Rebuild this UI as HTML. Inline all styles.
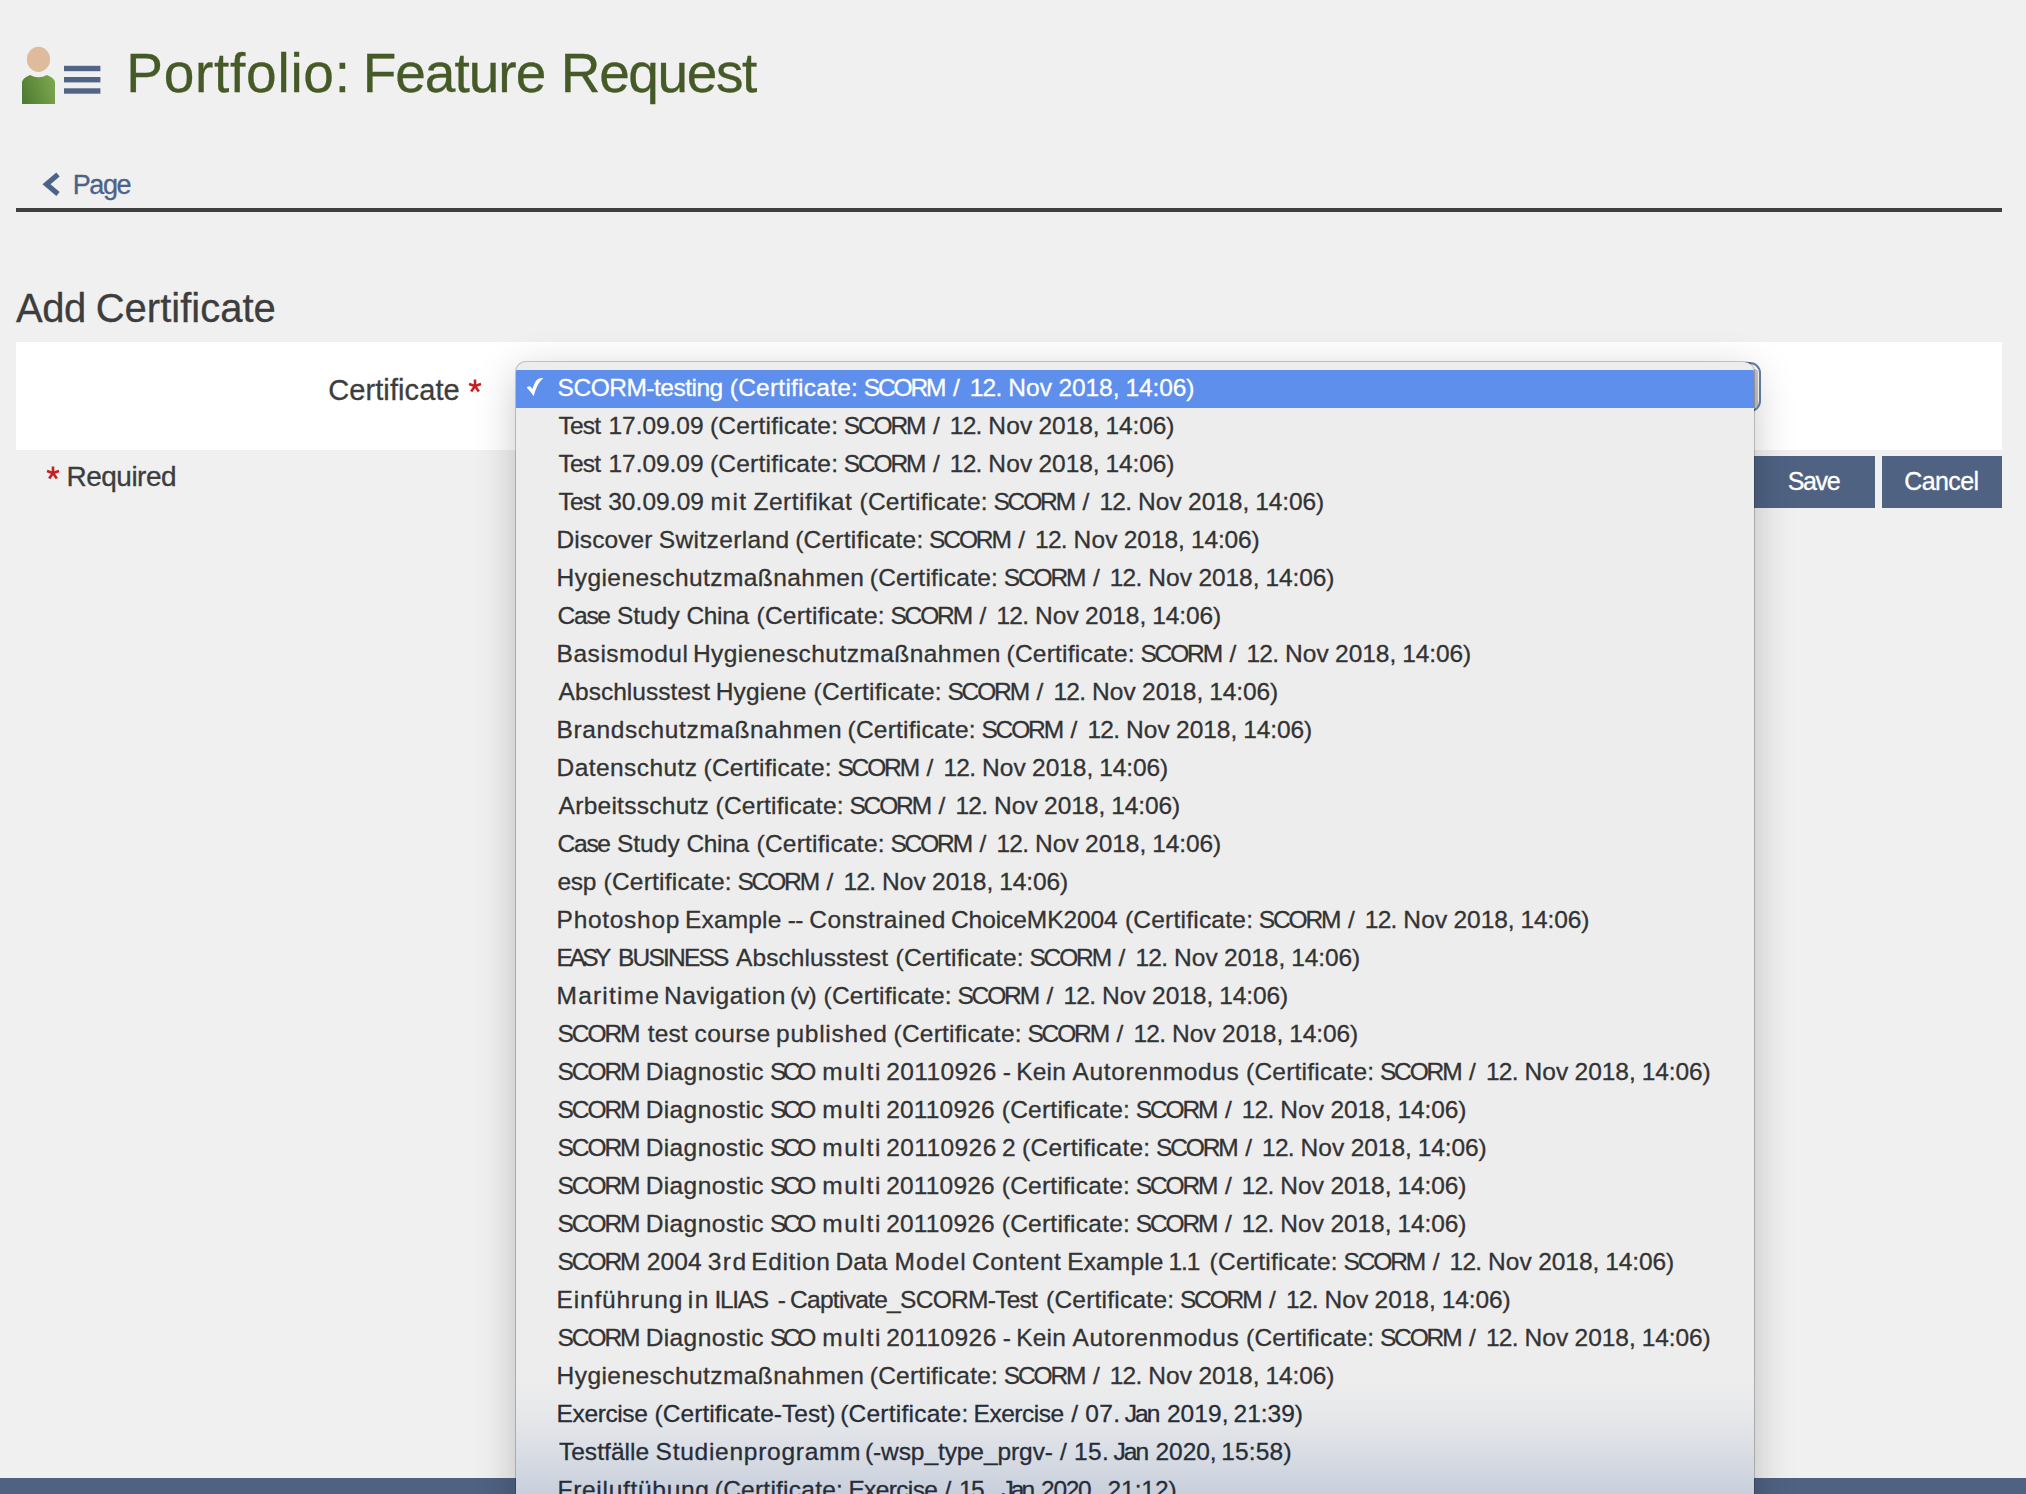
<!DOCTYPE html>
<html><head><meta charset="utf-8"><style>
html,body{margin:0;padding:0;width:2026px;height:1494px;overflow:hidden;background:#f0f0f0;font-family:"Liberation Sans",sans-serif;}
.abs{position:absolute;}
.tx{position:absolute;white-space:nowrap;line-height:1;-webkit-text-stroke:0.3px currentColor;}
#hr{left:16px;top:208px;width:1986px;height:4px;background:#404040;}
#panel{left:16px;top:342px;width:1986px;height:108px;background:#fff;}
.btn{position:absolute;top:456px;height:52px;background:#4f6282;}
#footer{left:0;top:1478px;width:2026px;height:16px;background:#4f6282;}
#sel{left:1000px;top:362px;width:757px;height:46px;border:2px solid #687ea3;border-radius:11px;background:#fff;}
#selband{left:1754px;top:369px;width:4px;height:39px;background:#c6c6c6;border-radius:0 4px 4px 0;}
#menu{left:516px;top:362px;width:1238px;height:1200px;background:#ededed;border-radius:10px 10px 0 0;
 box-shadow:0 0 0 1px rgba(0,0,0,0.2), 0 10px 40px rgba(0,0,0,0.22);overflow:hidden;}
#grad{position:absolute;left:0;top:1013px;width:100%;height:119px;background:linear-gradient(to bottom, rgba(191,200,216,0) 0%, rgba(191,200,216,0.12) 30%, rgba(191,200,216,0.4) 62%, rgba(191,200,216,0.8) 100%);}
#hl{position:absolute;left:0;top:8px;width:100%;height:38px;background:#5f8fec;}
#chk{position:absolute;left:4px;top:10px;}
</style></head><body>
<svg class="abs" style="left:0;top:0" width="110" height="110" viewBox="0 0 110 110">
 <defs><linearGradient id="bg1" x1="0" y1="0.65" x2="1" y2="0.35"><stop offset="0" stop-color="#4f7d34"/><stop offset="1" stop-color="#7da64c"/></linearGradient></defs>
 <ellipse cx="38.5" cy="59.4" rx="11.6" ry="12.6" fill="#dfbb9d"/>
 <path d="M22 104 L22 83 Q22 78 30 75 Q38.5 79.5 47 75 Q55 78 55 83 L55 104 Z" fill="url(#bg1)"/>
 <rect x="64" y="65.8" width="36.4" height="5.4" fill="#536385"/>
 <rect x="64" y="77" width="36.4" height="5.4" fill="#536385"/>
 <rect x="64" y="88.3" width="36.4" height="5.4" fill="#536385"/>
</svg>
<svg class="abs" style="left:41px;top:170px" width="24" height="30" viewBox="0 0 24 30">
 <path d="M17 4.5 L5.5 14.2 L17 24" fill="none" stroke="#4c6389" stroke-width="5.2" stroke-linecap="butt"/>
</svg>
<div id="hr" class="abs"></div>
<div id="panel" class="abs"></div>
<svg class="abs" style="left:467px;top:378px" width="16" height="16" viewBox="0 0 16 16"><g stroke="#c7201f" stroke-width="2.6" stroke-linecap="butt"><path d="M8 1.5 V8"/><path d="M8 8 L2 6"/><path d="M8 8 L14 6"/><path d="M8 8 L4.2 13.5"/><path d="M8 8 L11.8 13.5"/></g></svg>
<svg class="abs" style="left:45px;top:465px" width="16" height="16" viewBox="0 0 16 16"><g stroke="#c7201f" stroke-width="2.6" stroke-linecap="butt"><path d="M8 1.5 V8"/><path d="M8 8 L2 6"/><path d="M8 8 L14 6"/><path d="M8 8 L4.2 13.5"/><path d="M8 8 L11.8 13.5"/></g></svg>
<div class="btn" style="left:1754px;width:121px"></div>
<div class="btn" style="left:1882px;width:120px"></div>
<div class="tx" style="left:126.30px;top:46px;font-size:55px;letter-spacing:0.733px;color:#455a27">Portfolio:</div>
<div class="tx" style="left:362.70px;top:46px;font-size:55px;letter-spacing:-1.000px;color:#455a27">Feature</div>
<div class="tx" style="left:560.80px;top:46px;font-size:55px;letter-spacing:-1.383px;color:#455a27">Request</div>
<div class="tx" style="left:72.80px;top:172px;font-size:27px;letter-spacing:-1.433px;color:#4c6389">Page</div>
<div class="tx" style="left:16.00px;top:288px;font-size:40px;letter-spacing:-0.450px;color:#3d3d3d">Add</div>
<div class="tx" style="left:95.70px;top:288px;font-size:40px;letter-spacing:0.000px;color:#3d3d3d">Certificate</div>
<div class="tx" style="left:328.20px;top:376px;font-size:29px;letter-spacing:0.100px;color:#3d3d3d">Certificate</div>
<div class="tx" style="left:66.60px;top:463px;font-size:28px;letter-spacing:-0.529px;color:#3d3d3d">Required</div>
<div class="tx" style="left:1787.70px;top:469px;font-size:25px;letter-spacing:-1.367px;color:#fff">Save</div>
<div class="tx" style="left:1904.20px;top:469px;font-size:25px;letter-spacing:-0.580px;color:#fff">Cancel</div>
<div id="footer" class="abs"></div>
<div id="sel" class="abs"></div>
<div id="selband" class="abs"></div>
<div id="menu" class="abs">
<div id="grad"></div>
<div id="hl"></div>
<svg id="chk" width="32" height="30" viewBox="0 0 32 30"><path d="M6.8 15.8 Q7.6 14.2 9.2 14.2 Q11 14.6 12.4 16.9 Q14.6 10.5 17 7.8 Q19 5.8 23.3 6.1 Q20.2 9 18 12.6 Q15.8 16.8 13.6 24.3 Q10.4 19.2 6.8 15.8 Z" fill="#fff"/></svg>
<div class="tx" style="left:41.60px;top:14px;font-size:24.5px;letter-spacing:-0.492px;color:#fff">SCORM-testing</div>
<div class="tx" style="left:213.80px;top:14px;font-size:24.5px;letter-spacing:0.233px;color:#fff">(Certificate:</div>
<div class="tx" style="left:347.70px;top:14px;font-size:24.5px;letter-spacing:-2.125px;color:#fff">SCORM</div>
<div class="tx" style="left:436.90px;top:14px;font-size:24.5px;letter-spacing:0.000px;color:#fff">/</div>
<div class="tx" style="left:453.70px;top:14px;font-size:24.5px;letter-spacing:-0.750px;color:#fff">12.</div>
<div class="tx" style="left:492.20px;top:14px;font-size:24.5px;letter-spacing:0.150px;color:#fff">Nov</div>
<div class="tx" style="left:542.40px;top:14px;font-size:24.5px;letter-spacing:-0.050px;color:#fff">2018,</div>
<div class="tx" style="left:609.50px;top:14px;font-size:24.5px;letter-spacing:-0.120px;color:#fff">14:06)</div>
<div class="tx" style="left:42.60px;top:52px;font-size:24.5px;letter-spacing:-0.800px;color:#333">Test</div>
<div class="tx" style="left:92.50px;top:52px;font-size:24.5px;letter-spacing:-0.043px;color:#333">17.09.09</div>
<div class="tx" style="left:193.90px;top:52px;font-size:24.5px;letter-spacing:0.233px;color:#333">(Certificate:</div>
<div class="tx" style="left:327.80px;top:52px;font-size:24.5px;letter-spacing:-2.125px;color:#333">SCORM</div>
<div class="tx" style="left:417.00px;top:52px;font-size:24.5px;letter-spacing:0.000px;color:#333">/</div>
<div class="tx" style="left:433.80px;top:52px;font-size:24.5px;letter-spacing:-0.750px;color:#333">12.</div>
<div class="tx" style="left:472.30px;top:52px;font-size:24.5px;letter-spacing:0.150px;color:#333">Nov</div>
<div class="tx" style="left:522.50px;top:52px;font-size:24.5px;letter-spacing:-0.050px;color:#333">2018,</div>
<div class="tx" style="left:589.60px;top:52px;font-size:24.5px;letter-spacing:-0.120px;color:#333">14:06)</div>
<div class="tx" style="left:42.60px;top:90px;font-size:24.5px;letter-spacing:-0.800px;color:#333">Test</div>
<div class="tx" style="left:92.50px;top:90px;font-size:24.5px;letter-spacing:-0.043px;color:#333">17.09.09</div>
<div class="tx" style="left:193.90px;top:90px;font-size:24.5px;letter-spacing:0.233px;color:#333">(Certificate:</div>
<div class="tx" style="left:327.80px;top:90px;font-size:24.5px;letter-spacing:-2.125px;color:#333">SCORM</div>
<div class="tx" style="left:417.00px;top:90px;font-size:24.5px;letter-spacing:0.000px;color:#333">/</div>
<div class="tx" style="left:433.80px;top:90px;font-size:24.5px;letter-spacing:-0.750px;color:#333">12.</div>
<div class="tx" style="left:472.30px;top:90px;font-size:24.5px;letter-spacing:0.150px;color:#333">Nov</div>
<div class="tx" style="left:522.50px;top:90px;font-size:24.5px;letter-spacing:-0.050px;color:#333">2018,</div>
<div class="tx" style="left:589.60px;top:90px;font-size:24.5px;letter-spacing:-0.120px;color:#333">14:06)</div>
<div class="tx" style="left:42.60px;top:128px;font-size:24.5px;letter-spacing:-0.800px;color:#333">Test</div>
<div class="tx" style="left:92.20px;top:128px;font-size:24.5px;letter-spacing:0.057px;color:#333">30.09.09</div>
<div class="tx" style="left:194.60px;top:128px;font-size:24.5px;letter-spacing:1.400px;color:#333">mit</div>
<div class="tx" style="left:237.60px;top:128px;font-size:24.5px;letter-spacing:0.467px;color:#333">Zertifikat</div>
<div class="tx" style="left:343.50px;top:128px;font-size:24.5px;letter-spacing:0.233px;color:#333">(Certificate:</div>
<div class="tx" style="left:477.40px;top:128px;font-size:24.5px;letter-spacing:-2.125px;color:#333">SCORM</div>
<div class="tx" style="left:566.60px;top:128px;font-size:24.5px;letter-spacing:0.000px;color:#333">/</div>
<div class="tx" style="left:583.40px;top:128px;font-size:24.5px;letter-spacing:-0.750px;color:#333">12.</div>
<div class="tx" style="left:621.90px;top:128px;font-size:24.5px;letter-spacing:0.150px;color:#333">Nov</div>
<div class="tx" style="left:672.10px;top:128px;font-size:24.5px;letter-spacing:-0.050px;color:#333">2018,</div>
<div class="tx" style="left:739.20px;top:128px;font-size:24.5px;letter-spacing:-0.120px;color:#333">14:06)</div>
<div class="tx" style="left:40.60px;top:166px;font-size:24.5px;letter-spacing:0.057px;color:#333">Discover</div>
<div class="tx" style="left:142.80px;top:166px;font-size:24.5px;letter-spacing:0.370px;color:#333">Switzerland</div>
<div class="tx" style="left:279.20px;top:166px;font-size:24.5px;letter-spacing:0.233px;color:#333">(Certificate:</div>
<div class="tx" style="left:413.10px;top:166px;font-size:24.5px;letter-spacing:-2.125px;color:#333">SCORM</div>
<div class="tx" style="left:502.30px;top:166px;font-size:24.5px;letter-spacing:0.000px;color:#333">/</div>
<div class="tx" style="left:519.10px;top:166px;font-size:24.5px;letter-spacing:-0.750px;color:#333">12.</div>
<div class="tx" style="left:557.60px;top:166px;font-size:24.5px;letter-spacing:0.150px;color:#333">Nov</div>
<div class="tx" style="left:607.80px;top:166px;font-size:24.5px;letter-spacing:-0.050px;color:#333">2018,</div>
<div class="tx" style="left:674.90px;top:166px;font-size:24.5px;letter-spacing:-0.120px;color:#333">14:06)</div>
<div class="tx" style="left:40.60px;top:204px;font-size:24.5px;letter-spacing:0.433px;color:#333">Hygieneschutzmaßnahmen</div>
<div class="tx" style="left:353.80px;top:204px;font-size:24.5px;letter-spacing:0.233px;color:#333">(Certificate:</div>
<div class="tx" style="left:487.70px;top:204px;font-size:24.5px;letter-spacing:-2.125px;color:#333">SCORM</div>
<div class="tx" style="left:576.90px;top:204px;font-size:24.5px;letter-spacing:0.000px;color:#333">/</div>
<div class="tx" style="left:593.70px;top:204px;font-size:24.5px;letter-spacing:-0.750px;color:#333">12.</div>
<div class="tx" style="left:632.20px;top:204px;font-size:24.5px;letter-spacing:0.150px;color:#333">Nov</div>
<div class="tx" style="left:682.40px;top:204px;font-size:24.5px;letter-spacing:-0.050px;color:#333">2018,</div>
<div class="tx" style="left:749.50px;top:204px;font-size:24.5px;letter-spacing:-0.120px;color:#333">14:06)</div>
<div class="tx" style="left:41.60px;top:242px;font-size:24.5px;letter-spacing:-1.267px;color:#333">Case</div>
<div class="tx" style="left:100.90px;top:242px;font-size:24.5px;letter-spacing:0.025px;color:#333">Study</div>
<div class="tx" style="left:170.50px;top:242px;font-size:24.5px;letter-spacing:-0.375px;color:#333">China</div>
<div class="tx" style="left:240.50px;top:242px;font-size:24.5px;letter-spacing:0.233px;color:#333">(Certificate:</div>
<div class="tx" style="left:374.40px;top:242px;font-size:24.5px;letter-spacing:-2.125px;color:#333">SCORM</div>
<div class="tx" style="left:463.60px;top:242px;font-size:24.5px;letter-spacing:0.000px;color:#333">/</div>
<div class="tx" style="left:480.40px;top:242px;font-size:24.5px;letter-spacing:-0.750px;color:#333">12.</div>
<div class="tx" style="left:518.90px;top:242px;font-size:24.5px;letter-spacing:0.150px;color:#333">Nov</div>
<div class="tx" style="left:569.10px;top:242px;font-size:24.5px;letter-spacing:-0.050px;color:#333">2018,</div>
<div class="tx" style="left:636.20px;top:242px;font-size:24.5px;letter-spacing:-0.120px;color:#333">14:06)</div>
<div class="tx" style="left:40.60px;top:280px;font-size:24.5px;letter-spacing:0.522px;color:#333">Basismodul</div>
<div class="tx" style="left:176.90px;top:280px;font-size:24.5px;letter-spacing:0.443px;color:#333">Hygieneschutzmaßnahmen</div>
<div class="tx" style="left:490.50px;top:280px;font-size:24.5px;letter-spacing:0.233px;color:#333">(Certificate:</div>
<div class="tx" style="left:624.40px;top:280px;font-size:24.5px;letter-spacing:-2.125px;color:#333">SCORM</div>
<div class="tx" style="left:713.60px;top:280px;font-size:24.5px;letter-spacing:0.000px;color:#333">/</div>
<div class="tx" style="left:730.40px;top:280px;font-size:24.5px;letter-spacing:-0.750px;color:#333">12.</div>
<div class="tx" style="left:768.90px;top:280px;font-size:24.5px;letter-spacing:0.150px;color:#333">Nov</div>
<div class="tx" style="left:819.10px;top:280px;font-size:24.5px;letter-spacing:-0.050px;color:#333">2018,</div>
<div class="tx" style="left:886.20px;top:280px;font-size:24.5px;letter-spacing:-0.120px;color:#333">14:06)</div>
<div class="tx" style="left:42.60px;top:318px;font-size:24.5px;letter-spacing:0.033px;color:#333">Abschlusstest</div>
<div class="tx" style="left:199.80px;top:318px;font-size:24.5px;letter-spacing:0.100px;color:#333">Hygiene</div>
<div class="tx" style="left:297.50px;top:318px;font-size:24.5px;letter-spacing:0.233px;color:#333">(Certificate:</div>
<div class="tx" style="left:431.40px;top:318px;font-size:24.5px;letter-spacing:-2.125px;color:#333">SCORM</div>
<div class="tx" style="left:520.60px;top:318px;font-size:24.5px;letter-spacing:0.000px;color:#333">/</div>
<div class="tx" style="left:537.40px;top:318px;font-size:24.5px;letter-spacing:-0.750px;color:#333">12.</div>
<div class="tx" style="left:575.90px;top:318px;font-size:24.5px;letter-spacing:0.150px;color:#333">Nov</div>
<div class="tx" style="left:626.10px;top:318px;font-size:24.5px;letter-spacing:-0.050px;color:#333">2018,</div>
<div class="tx" style="left:693.20px;top:318px;font-size:24.5px;letter-spacing:-0.120px;color:#333">14:06)</div>
<div class="tx" style="left:40.60px;top:356px;font-size:24.5px;letter-spacing:0.589px;color:#333">Brandschutzmaßnahmen</div>
<div class="tx" style="left:331.50px;top:356px;font-size:24.5px;letter-spacing:0.233px;color:#333">(Certificate:</div>
<div class="tx" style="left:465.40px;top:356px;font-size:24.5px;letter-spacing:-2.125px;color:#333">SCORM</div>
<div class="tx" style="left:554.60px;top:356px;font-size:24.5px;letter-spacing:0.000px;color:#333">/</div>
<div class="tx" style="left:571.40px;top:356px;font-size:24.5px;letter-spacing:-0.750px;color:#333">12.</div>
<div class="tx" style="left:609.90px;top:356px;font-size:24.5px;letter-spacing:0.150px;color:#333">Nov</div>
<div class="tx" style="left:660.10px;top:356px;font-size:24.5px;letter-spacing:-0.050px;color:#333">2018,</div>
<div class="tx" style="left:727.20px;top:356px;font-size:24.5px;letter-spacing:-0.120px;color:#333">14:06)</div>
<div class="tx" style="left:40.60px;top:394px;font-size:24.5px;letter-spacing:0.420px;color:#333">Datenschutz</div>
<div class="tx" style="left:187.50px;top:394px;font-size:24.5px;letter-spacing:0.233px;color:#333">(Certificate:</div>
<div class="tx" style="left:321.40px;top:394px;font-size:24.5px;letter-spacing:-2.125px;color:#333">SCORM</div>
<div class="tx" style="left:410.60px;top:394px;font-size:24.5px;letter-spacing:0.000px;color:#333">/</div>
<div class="tx" style="left:427.40px;top:394px;font-size:24.5px;letter-spacing:-0.750px;color:#333">12.</div>
<div class="tx" style="left:465.90px;top:394px;font-size:24.5px;letter-spacing:0.150px;color:#333">Nov</div>
<div class="tx" style="left:516.10px;top:394px;font-size:24.5px;letter-spacing:-0.050px;color:#333">2018,</div>
<div class="tx" style="left:583.20px;top:394px;font-size:24.5px;letter-spacing:-0.120px;color:#333">14:06)</div>
<div class="tx" style="left:42.60px;top:432px;font-size:24.5px;letter-spacing:0.267px;color:#333">Arbeitsschutz</div>
<div class="tx" style="left:199.50px;top:432px;font-size:24.5px;letter-spacing:0.233px;color:#333">(Certificate:</div>
<div class="tx" style="left:333.40px;top:432px;font-size:24.5px;letter-spacing:-2.125px;color:#333">SCORM</div>
<div class="tx" style="left:422.60px;top:432px;font-size:24.5px;letter-spacing:0.000px;color:#333">/</div>
<div class="tx" style="left:439.40px;top:432px;font-size:24.5px;letter-spacing:-0.750px;color:#333">12.</div>
<div class="tx" style="left:477.90px;top:432px;font-size:24.5px;letter-spacing:0.150px;color:#333">Nov</div>
<div class="tx" style="left:528.10px;top:432px;font-size:24.5px;letter-spacing:-0.050px;color:#333">2018,</div>
<div class="tx" style="left:595.20px;top:432px;font-size:24.5px;letter-spacing:-0.120px;color:#333">14:06)</div>
<div class="tx" style="left:41.60px;top:470px;font-size:24.5px;letter-spacing:-1.267px;color:#333">Case</div>
<div class="tx" style="left:100.90px;top:470px;font-size:24.5px;letter-spacing:0.025px;color:#333">Study</div>
<div class="tx" style="left:170.50px;top:470px;font-size:24.5px;letter-spacing:-0.375px;color:#333">China</div>
<div class="tx" style="left:240.50px;top:470px;font-size:24.5px;letter-spacing:0.233px;color:#333">(Certificate:</div>
<div class="tx" style="left:374.40px;top:470px;font-size:24.5px;letter-spacing:-2.125px;color:#333">SCORM</div>
<div class="tx" style="left:463.60px;top:470px;font-size:24.5px;letter-spacing:0.000px;color:#333">/</div>
<div class="tx" style="left:480.40px;top:470px;font-size:24.5px;letter-spacing:-0.750px;color:#333">12.</div>
<div class="tx" style="left:518.90px;top:470px;font-size:24.5px;letter-spacing:0.150px;color:#333">Nov</div>
<div class="tx" style="left:569.10px;top:470px;font-size:24.5px;letter-spacing:-0.050px;color:#333">2018,</div>
<div class="tx" style="left:636.20px;top:470px;font-size:24.5px;letter-spacing:-0.120px;color:#333">14:06)</div>
<div class="tx" style="left:41.60px;top:508px;font-size:24.5px;letter-spacing:-0.400px;color:#333">esp</div>
<div class="tx" style="left:87.50px;top:508px;font-size:24.5px;letter-spacing:0.233px;color:#333">(Certificate:</div>
<div class="tx" style="left:221.40px;top:508px;font-size:24.5px;letter-spacing:-2.125px;color:#333">SCORM</div>
<div class="tx" style="left:310.60px;top:508px;font-size:24.5px;letter-spacing:0.000px;color:#333">/</div>
<div class="tx" style="left:327.40px;top:508px;font-size:24.5px;letter-spacing:-0.750px;color:#333">12.</div>
<div class="tx" style="left:365.90px;top:508px;font-size:24.5px;letter-spacing:0.150px;color:#333">Nov</div>
<div class="tx" style="left:416.10px;top:508px;font-size:24.5px;letter-spacing:-0.050px;color:#333">2018,</div>
<div class="tx" style="left:483.20px;top:508px;font-size:24.5px;letter-spacing:-0.120px;color:#333">14:06)</div>
<div class="tx" style="left:40.60px;top:546px;font-size:24.5px;letter-spacing:0.700px;color:#333">Photoshop</div>
<div class="tx" style="left:169.00px;top:546px;font-size:24.5px;letter-spacing:0.167px;color:#333">Example</div>
<div class="tx" style="left:271.80px;top:546px;font-size:24.5px;letter-spacing:-0.800px;color:#333">--</div>
<div class="tx" style="left:293.30px;top:546px;font-size:24.5px;letter-spacing:0.400px;color:#333">Constrained</div>
<div class="tx" style="left:435.00px;top:546px;font-size:24.5px;letter-spacing:-0.073px;color:#333">ChoiceMK2004</div>
<div class="tx" style="left:608.90px;top:546px;font-size:24.5px;letter-spacing:0.233px;color:#333">(Certificate:</div>
<div class="tx" style="left:742.80px;top:546px;font-size:24.5px;letter-spacing:-2.125px;color:#333">SCORM</div>
<div class="tx" style="left:832.00px;top:546px;font-size:24.5px;letter-spacing:0.000px;color:#333">/</div>
<div class="tx" style="left:848.80px;top:546px;font-size:24.5px;letter-spacing:-0.750px;color:#333">12.</div>
<div class="tx" style="left:887.30px;top:546px;font-size:24.5px;letter-spacing:0.150px;color:#333">Nov</div>
<div class="tx" style="left:937.50px;top:546px;font-size:24.5px;letter-spacing:-0.050px;color:#333">2018,</div>
<div class="tx" style="left:1004.60px;top:546px;font-size:24.5px;letter-spacing:-0.120px;color:#333">14:06)</div>
<div class="tx" style="left:40.60px;top:584px;font-size:24.5px;letter-spacing:-3.500px;color:#333">EASY</div>
<div class="tx" style="left:102.00px;top:584px;font-size:24.5px;letter-spacing:-1.800px;color:#333">BUSINESS</div>
<div class="tx" style="left:220.10px;top:584px;font-size:24.5px;letter-spacing:0.058px;color:#333">Abschlusstest</div>
<div class="tx" style="left:379.50px;top:584px;font-size:24.5px;letter-spacing:0.233px;color:#333">(Certificate:</div>
<div class="tx" style="left:513.40px;top:584px;font-size:24.5px;letter-spacing:-2.125px;color:#333">SCORM</div>
<div class="tx" style="left:602.60px;top:584px;font-size:24.5px;letter-spacing:0.000px;color:#333">/</div>
<div class="tx" style="left:619.40px;top:584px;font-size:24.5px;letter-spacing:-0.750px;color:#333">12.</div>
<div class="tx" style="left:657.90px;top:584px;font-size:24.5px;letter-spacing:0.150px;color:#333">Nov</div>
<div class="tx" style="left:708.10px;top:584px;font-size:24.5px;letter-spacing:-0.050px;color:#333">2018,</div>
<div class="tx" style="left:775.20px;top:584px;font-size:24.5px;letter-spacing:-0.120px;color:#333">14:06)</div>
<div class="tx" style="left:40.60px;top:622px;font-size:24.5px;letter-spacing:1.186px;color:#333">Maritime</div>
<div class="tx" style="left:148.00px;top:622px;font-size:24.5px;letter-spacing:0.633px;color:#333">Navigation</div>
<div class="tx" style="left:274.00px;top:622px;font-size:24.5px;letter-spacing:-1.000px;color:#333">(v)</div>
<div class="tx" style="left:307.50px;top:622px;font-size:24.5px;letter-spacing:0.233px;color:#333">(Certificate:</div>
<div class="tx" style="left:441.40px;top:622px;font-size:24.5px;letter-spacing:-2.125px;color:#333">SCORM</div>
<div class="tx" style="left:530.60px;top:622px;font-size:24.5px;letter-spacing:0.000px;color:#333">/</div>
<div class="tx" style="left:547.40px;top:622px;font-size:24.5px;letter-spacing:-0.750px;color:#333">12.</div>
<div class="tx" style="left:585.90px;top:622px;font-size:24.5px;letter-spacing:0.150px;color:#333">Nov</div>
<div class="tx" style="left:636.10px;top:622px;font-size:24.5px;letter-spacing:-0.050px;color:#333">2018,</div>
<div class="tx" style="left:703.20px;top:622px;font-size:24.5px;letter-spacing:-0.120px;color:#333">14:06)</div>
<div class="tx" style="left:41.60px;top:660px;font-size:24.5px;letter-spacing:-2.100px;color:#333">SCORM</div>
<div class="tx" style="left:131.70px;top:660px;font-size:24.5px;letter-spacing:0.167px;color:#333">test</div>
<div class="tx" style="left:178.50px;top:660px;font-size:24.5px;letter-spacing:0.400px;color:#333">course</div>
<div class="tx" style="left:260.00px;top:660px;font-size:24.5px;letter-spacing:0.750px;color:#333">published</div>
<div class="tx" style="left:377.50px;top:660px;font-size:24.5px;letter-spacing:0.233px;color:#333">(Certificate:</div>
<div class="tx" style="left:511.40px;top:660px;font-size:24.5px;letter-spacing:-2.125px;color:#333">SCORM</div>
<div class="tx" style="left:600.60px;top:660px;font-size:24.5px;letter-spacing:0.000px;color:#333">/</div>
<div class="tx" style="left:617.40px;top:660px;font-size:24.5px;letter-spacing:-0.750px;color:#333">12.</div>
<div class="tx" style="left:655.90px;top:660px;font-size:24.5px;letter-spacing:0.150px;color:#333">Nov</div>
<div class="tx" style="left:706.10px;top:660px;font-size:24.5px;letter-spacing:-0.050px;color:#333">2018,</div>
<div class="tx" style="left:773.20px;top:660px;font-size:24.5px;letter-spacing:-0.120px;color:#333">14:06)</div>
<div class="tx" style="left:41.60px;top:698px;font-size:24.5px;letter-spacing:-2.100px;color:#333">SCORM</div>
<div class="tx" style="left:129.70px;top:698px;font-size:24.5px;letter-spacing:0.389px;color:#333">Diagnostic</div>
<div class="tx" style="left:254.00px;top:698px;font-size:24.5px;letter-spacing:-3.400px;color:#333">SCO</div>
<div class="tx" style="left:306.20px;top:698px;font-size:24.5px;letter-spacing:1.625px;color:#333">multi</div>
<div class="tx" style="left:370.20px;top:698px;font-size:24.5px;letter-spacing:0.414px;color:#333">20110926</div>
<div class="tx" style="left:486.70px;top:698px;font-size:24.5px;letter-spacing:0.000px;color:#333">-</div>
<div class="tx" style="left:500.20px;top:698px;font-size:24.5px;letter-spacing:0.200px;color:#333">Kein</div>
<div class="tx" style="left:556.60px;top:698px;font-size:24.5px;letter-spacing:0.609px;color:#333">Autorenmodus</div>
<div class="tx" style="left:730.00px;top:698px;font-size:24.5px;letter-spacing:0.233px;color:#333">(Certificate:</div>
<div class="tx" style="left:863.90px;top:698px;font-size:24.5px;letter-spacing:-2.125px;color:#333">SCORM</div>
<div class="tx" style="left:953.10px;top:698px;font-size:24.5px;letter-spacing:0.000px;color:#333">/</div>
<div class="tx" style="left:969.90px;top:698px;font-size:24.5px;letter-spacing:-0.750px;color:#333">12.</div>
<div class="tx" style="left:1008.40px;top:698px;font-size:24.5px;letter-spacing:0.150px;color:#333">Nov</div>
<div class="tx" style="left:1058.60px;top:698px;font-size:24.5px;letter-spacing:-0.050px;color:#333">2018,</div>
<div class="tx" style="left:1125.70px;top:698px;font-size:24.5px;letter-spacing:-0.120px;color:#333">14:06)</div>
<div class="tx" style="left:41.60px;top:736px;font-size:24.5px;letter-spacing:-2.100px;color:#333">SCORM</div>
<div class="tx" style="left:129.70px;top:736px;font-size:24.5px;letter-spacing:0.389px;color:#333">Diagnostic</div>
<div class="tx" style="left:254.00px;top:736px;font-size:24.5px;letter-spacing:-3.400px;color:#333">SCO</div>
<div class="tx" style="left:306.20px;top:736px;font-size:24.5px;letter-spacing:1.625px;color:#333">multi</div>
<div class="tx" style="left:370.20px;top:736px;font-size:24.5px;letter-spacing:0.186px;color:#333">20110926</div>
<div class="tx" style="left:485.80px;top:736px;font-size:24.5px;letter-spacing:0.233px;color:#333">(Certificate:</div>
<div class="tx" style="left:619.70px;top:736px;font-size:24.5px;letter-spacing:-2.125px;color:#333">SCORM</div>
<div class="tx" style="left:708.90px;top:736px;font-size:24.5px;letter-spacing:0.000px;color:#333">/</div>
<div class="tx" style="left:725.70px;top:736px;font-size:24.5px;letter-spacing:-0.750px;color:#333">12.</div>
<div class="tx" style="left:764.20px;top:736px;font-size:24.5px;letter-spacing:0.150px;color:#333">Nov</div>
<div class="tx" style="left:814.40px;top:736px;font-size:24.5px;letter-spacing:-0.050px;color:#333">2018,</div>
<div class="tx" style="left:881.50px;top:736px;font-size:24.5px;letter-spacing:-0.120px;color:#333">14:06)</div>
<div class="tx" style="left:41.60px;top:774px;font-size:24.5px;letter-spacing:-2.100px;color:#333">SCORM</div>
<div class="tx" style="left:129.70px;top:774px;font-size:24.5px;letter-spacing:0.389px;color:#333">Diagnostic</div>
<div class="tx" style="left:254.00px;top:774px;font-size:24.5px;letter-spacing:-3.400px;color:#333">SCO</div>
<div class="tx" style="left:306.20px;top:774px;font-size:24.5px;letter-spacing:1.625px;color:#333">multi</div>
<div class="tx" style="left:370.20px;top:774px;font-size:24.5px;letter-spacing:0.414px;color:#333">20110926</div>
<div class="tx" style="left:486.00px;top:774px;font-size:24.5px;letter-spacing:0.000px;color:#333">2</div>
<div class="tx" style="left:506.10px;top:774px;font-size:24.5px;letter-spacing:0.233px;color:#333">(Certificate:</div>
<div class="tx" style="left:640.00px;top:774px;font-size:24.5px;letter-spacing:-2.125px;color:#333">SCORM</div>
<div class="tx" style="left:729.20px;top:774px;font-size:24.5px;letter-spacing:0.000px;color:#333">/</div>
<div class="tx" style="left:746.00px;top:774px;font-size:24.5px;letter-spacing:-0.750px;color:#333">12.</div>
<div class="tx" style="left:784.50px;top:774px;font-size:24.5px;letter-spacing:0.150px;color:#333">Nov</div>
<div class="tx" style="left:834.70px;top:774px;font-size:24.5px;letter-spacing:-0.050px;color:#333">2018,</div>
<div class="tx" style="left:901.80px;top:774px;font-size:24.5px;letter-spacing:-0.120px;color:#333">14:06)</div>
<div class="tx" style="left:41.60px;top:812px;font-size:24.5px;letter-spacing:-2.100px;color:#333">SCORM</div>
<div class="tx" style="left:129.70px;top:812px;font-size:24.5px;letter-spacing:0.389px;color:#333">Diagnostic</div>
<div class="tx" style="left:254.00px;top:812px;font-size:24.5px;letter-spacing:-3.400px;color:#333">SCO</div>
<div class="tx" style="left:306.20px;top:812px;font-size:24.5px;letter-spacing:1.625px;color:#333">multi</div>
<div class="tx" style="left:370.20px;top:812px;font-size:24.5px;letter-spacing:0.186px;color:#333">20110926</div>
<div class="tx" style="left:485.80px;top:812px;font-size:24.5px;letter-spacing:0.233px;color:#333">(Certificate:</div>
<div class="tx" style="left:619.70px;top:812px;font-size:24.5px;letter-spacing:-2.125px;color:#333">SCORM</div>
<div class="tx" style="left:708.90px;top:812px;font-size:24.5px;letter-spacing:0.000px;color:#333">/</div>
<div class="tx" style="left:725.70px;top:812px;font-size:24.5px;letter-spacing:-0.750px;color:#333">12.</div>
<div class="tx" style="left:764.20px;top:812px;font-size:24.5px;letter-spacing:0.150px;color:#333">Nov</div>
<div class="tx" style="left:814.40px;top:812px;font-size:24.5px;letter-spacing:-0.050px;color:#333">2018,</div>
<div class="tx" style="left:881.50px;top:812px;font-size:24.5px;letter-spacing:-0.120px;color:#333">14:06)</div>
<div class="tx" style="left:41.60px;top:850px;font-size:24.5px;letter-spacing:-2.100px;color:#333">SCORM</div>
<div class="tx" style="left:129.70px;top:850px;font-size:24.5px;letter-spacing:0.389px;color:#333">Diagnostic</div>
<div class="tx" style="left:254.00px;top:850px;font-size:24.5px;letter-spacing:-3.400px;color:#333">SCO</div>
<div class="tx" style="left:306.20px;top:850px;font-size:24.5px;letter-spacing:1.625px;color:#333">multi</div>
<div class="tx" style="left:370.20px;top:850px;font-size:24.5px;letter-spacing:0.186px;color:#333">20110926</div>
<div class="tx" style="left:485.80px;top:850px;font-size:24.5px;letter-spacing:0.233px;color:#333">(Certificate:</div>
<div class="tx" style="left:619.70px;top:850px;font-size:24.5px;letter-spacing:-2.125px;color:#333">SCORM</div>
<div class="tx" style="left:708.90px;top:850px;font-size:24.5px;letter-spacing:0.000px;color:#333">/</div>
<div class="tx" style="left:725.70px;top:850px;font-size:24.5px;letter-spacing:-0.750px;color:#333">12.</div>
<div class="tx" style="left:764.20px;top:850px;font-size:24.5px;letter-spacing:0.150px;color:#333">Nov</div>
<div class="tx" style="left:814.40px;top:850px;font-size:24.5px;letter-spacing:-0.050px;color:#333">2018,</div>
<div class="tx" style="left:881.50px;top:850px;font-size:24.5px;letter-spacing:-0.120px;color:#333">14:06)</div>
<div class="tx" style="left:41.60px;top:888px;font-size:24.5px;letter-spacing:-2.100px;color:#333">SCORM</div>
<div class="tx" style="left:130.70px;top:888px;font-size:24.5px;letter-spacing:0.133px;color:#333">2004</div>
<div class="tx" style="left:191.80px;top:888px;font-size:24.5px;letter-spacing:1.400px;color:#333">3rd</div>
<div class="tx" style="left:235.20px;top:888px;font-size:24.5px;letter-spacing:0.633px;color:#333">Edition</div>
<div class="tx" style="left:319.60px;top:888px;font-size:24.5px;letter-spacing:0.000px;color:#333">Data</div>
<div class="tx" style="left:378.50px;top:888px;font-size:24.5px;letter-spacing:1.100px;color:#333">Model</div>
<div class="tx" style="left:456.00px;top:888px;font-size:24.5px;letter-spacing:0.500px;color:#333">Content</div>
<div class="tx" style="left:551.20px;top:888px;font-size:24.5px;letter-spacing:0.150px;color:#333">Example</div>
<div class="tx" style="left:652.60px;top:888px;font-size:24.5px;letter-spacing:-1.150px;color:#333">1.1</div>
<div class="tx" style="left:693.60px;top:888px;font-size:24.5px;letter-spacing:0.233px;color:#333">(Certificate:</div>
<div class="tx" style="left:827.50px;top:888px;font-size:24.5px;letter-spacing:-2.125px;color:#333">SCORM</div>
<div class="tx" style="left:916.70px;top:888px;font-size:24.5px;letter-spacing:0.000px;color:#333">/</div>
<div class="tx" style="left:933.50px;top:888px;font-size:24.5px;letter-spacing:-0.750px;color:#333">12.</div>
<div class="tx" style="left:972.00px;top:888px;font-size:24.5px;letter-spacing:0.150px;color:#333">Nov</div>
<div class="tx" style="left:1022.20px;top:888px;font-size:24.5px;letter-spacing:-0.050px;color:#333">2018,</div>
<div class="tx" style="left:1089.30px;top:888px;font-size:24.5px;letter-spacing:-0.120px;color:#333">14:06)</div>
<div class="tx" style="left:40.60px;top:926px;font-size:24.5px;letter-spacing:0.800px;color:#333">Einführung</div>
<div class="tx" style="left:171.80px;top:926px;font-size:24.5px;letter-spacing:1.400px;color:#333">in</div>
<div class="tx" style="left:198.60px;top:926px;font-size:24.5px;letter-spacing:-1.375px;color:#333">ILIAS</div>
<div class="tx" style="left:261.80px;top:926px;font-size:24.5px;letter-spacing:0.000px;color:#333">-</div>
<div class="tx" style="left:274.00px;top:926px;font-size:24.5px;letter-spacing:-0.711px;color:#333">Captivate_SCORM-Test</div>
<div class="tx" style="left:530.00px;top:926px;font-size:24.5px;letter-spacing:0.233px;color:#333">(Certificate:</div>
<div class="tx" style="left:663.90px;top:926px;font-size:24.5px;letter-spacing:-2.125px;color:#333">SCORM</div>
<div class="tx" style="left:753.10px;top:926px;font-size:24.5px;letter-spacing:0.000px;color:#333">/</div>
<div class="tx" style="left:769.90px;top:926px;font-size:24.5px;letter-spacing:-0.750px;color:#333">12.</div>
<div class="tx" style="left:808.40px;top:926px;font-size:24.5px;letter-spacing:0.150px;color:#333">Nov</div>
<div class="tx" style="left:858.60px;top:926px;font-size:24.5px;letter-spacing:-0.050px;color:#333">2018,</div>
<div class="tx" style="left:925.70px;top:926px;font-size:24.5px;letter-spacing:-0.120px;color:#333">14:06)</div>
<div class="tx" style="left:41.60px;top:964px;font-size:24.5px;letter-spacing:-2.100px;color:#333">SCORM</div>
<div class="tx" style="left:129.70px;top:964px;font-size:24.5px;letter-spacing:0.389px;color:#333">Diagnostic</div>
<div class="tx" style="left:254.00px;top:964px;font-size:24.5px;letter-spacing:-3.400px;color:#333">SCO</div>
<div class="tx" style="left:306.20px;top:964px;font-size:24.5px;letter-spacing:1.625px;color:#333">multi</div>
<div class="tx" style="left:370.20px;top:964px;font-size:24.5px;letter-spacing:0.414px;color:#333">20110926</div>
<div class="tx" style="left:486.70px;top:964px;font-size:24.5px;letter-spacing:0.000px;color:#333">-</div>
<div class="tx" style="left:500.20px;top:964px;font-size:24.5px;letter-spacing:0.200px;color:#333">Kein</div>
<div class="tx" style="left:556.60px;top:964px;font-size:24.5px;letter-spacing:0.609px;color:#333">Autorenmodus</div>
<div class="tx" style="left:730.00px;top:964px;font-size:24.5px;letter-spacing:0.233px;color:#333">(Certificate:</div>
<div class="tx" style="left:863.90px;top:964px;font-size:24.5px;letter-spacing:-2.125px;color:#333">SCORM</div>
<div class="tx" style="left:953.10px;top:964px;font-size:24.5px;letter-spacing:0.000px;color:#333">/</div>
<div class="tx" style="left:969.90px;top:964px;font-size:24.5px;letter-spacing:-0.750px;color:#333">12.</div>
<div class="tx" style="left:1008.40px;top:964px;font-size:24.5px;letter-spacing:0.150px;color:#333">Nov</div>
<div class="tx" style="left:1058.60px;top:964px;font-size:24.5px;letter-spacing:-0.050px;color:#333">2018,</div>
<div class="tx" style="left:1125.70px;top:964px;font-size:24.5px;letter-spacing:-0.120px;color:#333">14:06)</div>
<div class="tx" style="left:40.60px;top:1002px;font-size:24.5px;letter-spacing:0.433px;color:#333">Hygieneschutzmaßnahmen</div>
<div class="tx" style="left:353.80px;top:1002px;font-size:24.5px;letter-spacing:0.233px;color:#333">(Certificate:</div>
<div class="tx" style="left:487.70px;top:1002px;font-size:24.5px;letter-spacing:-2.125px;color:#333">SCORM</div>
<div class="tx" style="left:576.90px;top:1002px;font-size:24.5px;letter-spacing:0.000px;color:#333">/</div>
<div class="tx" style="left:593.70px;top:1002px;font-size:24.5px;letter-spacing:-0.750px;color:#333">12.</div>
<div class="tx" style="left:632.20px;top:1002px;font-size:24.5px;letter-spacing:0.150px;color:#333">Nov</div>
<div class="tx" style="left:682.40px;top:1002px;font-size:24.5px;letter-spacing:-0.050px;color:#333">2018,</div>
<div class="tx" style="left:749.50px;top:1002px;font-size:24.5px;letter-spacing:-0.120px;color:#333">14:06)</div>
<div class="tx" style="left:40.60px;top:1040px;font-size:24.5px;letter-spacing:-0.386px;color:#272d38">Exercise</div>
<div class="tx" style="left:138.60px;top:1040px;font-size:24.5px;letter-spacing:0.065px;color:#272d38">(Certificate-Test)</div>
<div class="tx" style="left:324.20px;top:1040px;font-size:24.5px;letter-spacing:0.233px;color:#272d38">(Certificate:</div>
<div class="tx" style="left:457.60px;top:1040px;font-size:24.5px;letter-spacing:-0.486px;color:#272d38">Exercise</div>
<div class="tx" style="left:555.30px;top:1040px;font-size:24.5px;letter-spacing:0.000px;color:#272d38">/</div>
<div class="tx" style="left:569.30px;top:1040px;font-size:24.5px;letter-spacing:0.350px;color:#272d38">07.</div>
<div class="tx" style="left:608.70px;top:1040px;font-size:24.5px;letter-spacing:-1.950px;color:#272d38">Jan</div>
<div class="tx" style="left:650.90px;top:1040px;font-size:24.5px;letter-spacing:0.075px;color:#272d38">2019,</div>
<div class="tx" style="left:717.50px;top:1040px;font-size:24.5px;letter-spacing:0.000px;color:#272d38">21:39)</div>
<div class="tx" style="left:42.90px;top:1078px;font-size:24.5px;letter-spacing:0.050px;color:#272d38">Testfälle</div>
<div class="tx" style="left:139.60px;top:1078px;font-size:24.5px;letter-spacing:0.729px;color:#272d38">Studienprogramm</div>
<div class="tx" style="left:348.90px;top:1078px;font-size:24.5px;letter-spacing:-0.080px;color:#272d38">(-wsp_type_prgv-</div>
<div class="tx" style="left:544.00px;top:1078px;font-size:24.5px;letter-spacing:0.000px;color:#272d38">/</div>
<div class="tx" style="left:558.00px;top:1078px;font-size:24.5px;letter-spacing:0.350px;color:#272d38">15.</div>
<div class="tx" style="left:597.50px;top:1078px;font-size:24.5px;letter-spacing:-1.950px;color:#272d38">Jan</div>
<div class="tx" style="left:639.60px;top:1078px;font-size:24.5px;letter-spacing:-0.100px;color:#272d38">2020,</div>
<div class="tx" style="left:705.20px;top:1078px;font-size:24.5px;letter-spacing:0.180px;color:#272d38">15:58)</div>
<div class="tx" style="left:41.50px;top:1116px;font-size:24.5px;letter-spacing:0.708px;color:#272d38">Freiluftübung</div>
<div class="tx" style="left:198.80px;top:1116px;font-size:24.5px;letter-spacing:0.233px;color:#272d38">(Certificate:</div>
<div class="tx" style="left:332.40px;top:1116px;font-size:24.5px;letter-spacing:-0.629px;color:#272d38">Exercise</div>
<div class="tx" style="left:428.50px;top:1116px;font-size:24.5px;letter-spacing:0.000px;color:#272d38">/</div>
<div class="tx" style="left:442.90px;top:1116px;font-size:24.5px;letter-spacing:-1.450px;color:#272d38">15.</div>
<div class="tx" style="left:485.50px;top:1116px;font-size:24.5px;letter-spacing:-3.000px;color:#272d38">Jan</div>
<div class="tx" style="left:525.10px;top:1116px;font-size:24.5px;letter-spacing:-1.300px;color:#272d38">2020,</div>
<div class="tx" style="left:591.60px;top:1116px;font-size:24.5px;letter-spacing:-0.100px;color:#272d38">21:12)</div>
</div>
</body></html>
